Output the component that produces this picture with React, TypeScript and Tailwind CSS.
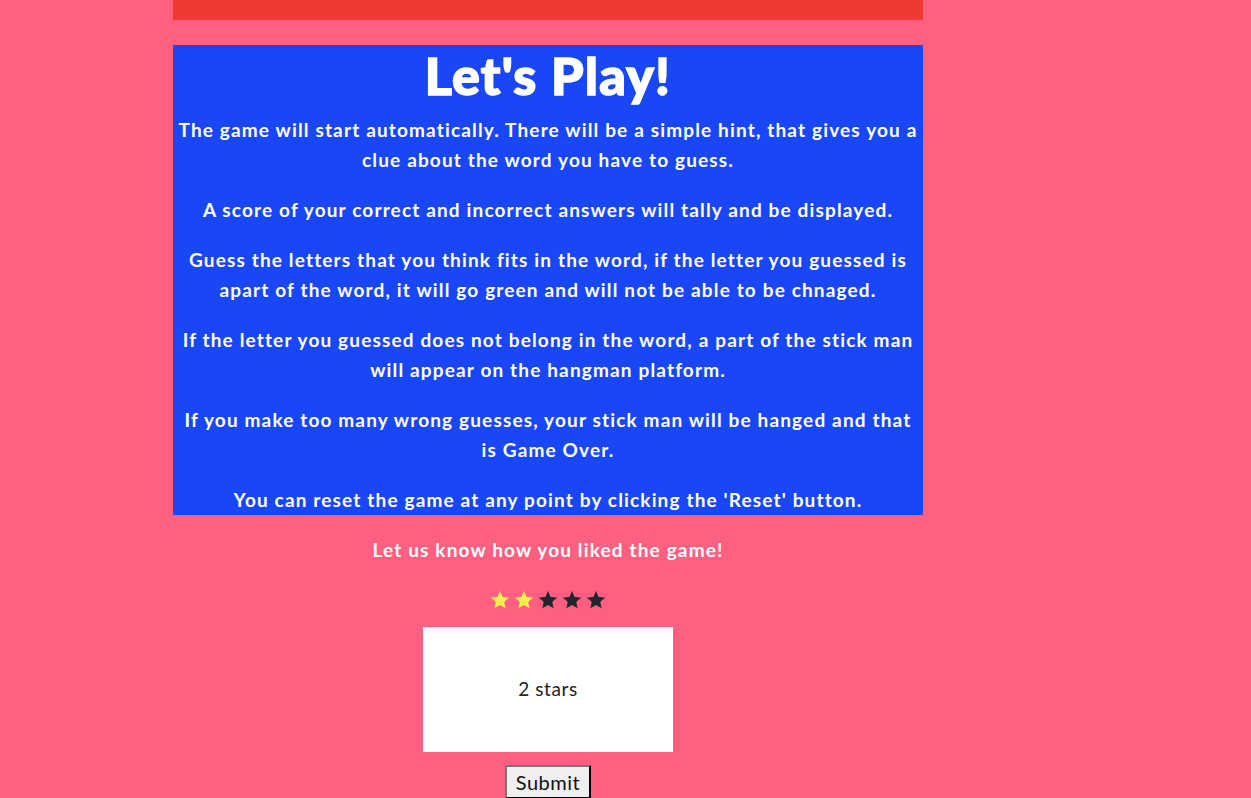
import React from 'react';

const paragraphs = [
  'The game will start automatically. There will be a simple hint, that gives you a clue about the word you have to guess.',
  'A score of your correct and incorrect answers will tally and be displayed.',
  'Guess the letters that you think fits in the word, if the letter you guessed is apart of the word, it will go green and will not be able to be chnaged.',
  'If the letter you guessed does not belong in the word, a part of the stick man will appear on the hangman platform.',
  'If you make too many wrong guesses, your stick man will be hanged and that is Game Over.',
  "You can reset the game at any point by clicking the 'Reset' button.",
];

function Star({ filled }: { filled: boolean }) {
  return (
    <svg viewBox="0 0 24 24" className="w-[22px] h-[22px]">
      <path
        d="M12 2.2l2.9 6.6 7.1.6-5.4 4.7 1.6 7-6.2-3.7-6.2 3.7 1.6-7L2 9.4l7.1-.6z"
        fill={filled ? '#f4ef4d' : '#1f2630'}
      />
    </svg>
  );
}

export default function App() {
  return (
    <div className="min-h-[798px] bg-[#ff5f80] font-['Lato',sans-serif]">
      <div className="w-[750px] ml-[173px]">
        <div className="h-5 bg-[#f03835]" />

        <section className="mt-[25px] bg-[#1a47f5] text-white text-center px-1">
          <h1 className="text-[52px] font-black leading-[60px] tracking-[1.2px] [-webkit-text-stroke:1.5px_white]">
            Let's Play!
          </h1>
          <div className="mt-[10px] flex flex-col gap-5">
            {paragraphs.map((p) => (
              <p key={p} className="text-[19px] font-bold leading-[30px] tracking-[1.15px]">
                {p}
              </p>
            ))}
          </div>
        </section>

        <div className="flex flex-col items-center text-center">
          <p className="mt-5 text-[19px] font-bold leading-[30px] tracking-[1.15px] text-white">
            Let us know how you liked the game!
          </p>
          <div className="mt-[24px] flex gap-[2px]">
            <Star filled />
            <Star filled />
            <Star filled={false} />
            <Star filled={false} />
            <Star filled={false} />
          </div>
          <div className="mt-[16px] w-[250px] h-[125px] bg-white flex items-center justify-center text-[19px] tracking-[0.6px] text-[#222]">
            2 stars
          </div>
          <button className="mt-[13px] px-[9px] h-[34px] text-[20px] tracking-[0.5px] bg-[#efefef] border-2 border-t-[#767676] border-l-[#767676] border-r-black border-b-black text-[#111]">
            Submit
          </button>
        </div>
      </div>
    </div>
  );
}
